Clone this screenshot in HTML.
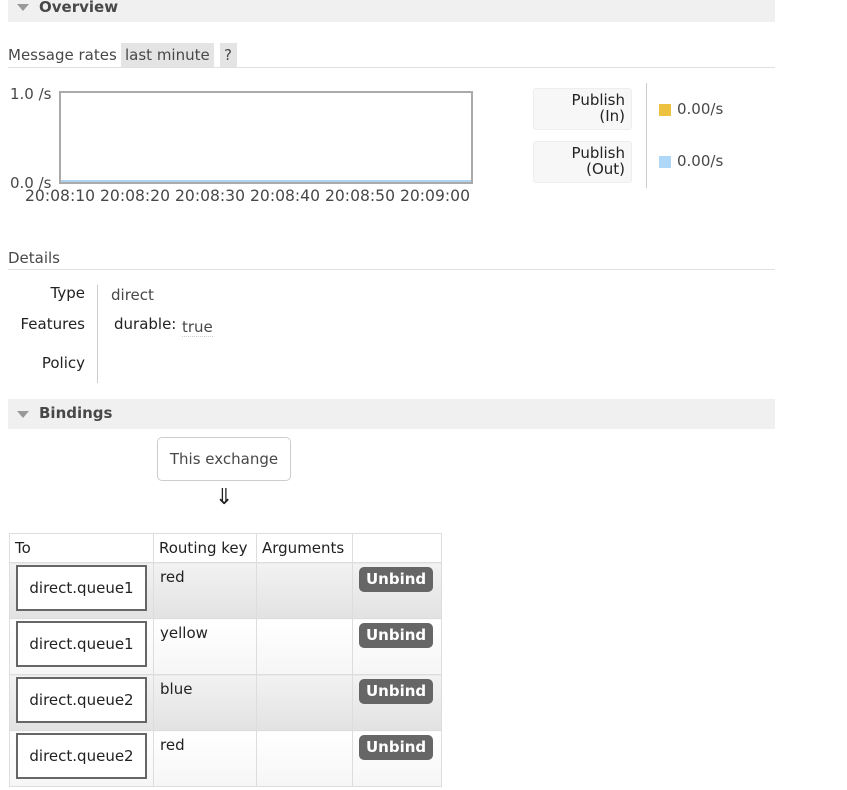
<!DOCTYPE html>
<html><head><meta charset="utf-8"><style>
*{margin:0;padding:0;box-sizing:border-box}
body{width:847px;height:790px;background:#fff;font-family:"DejaVu Sans","Liberation Sans",sans-serif;font-size:15px;color:#484848;position:relative;overflow:hidden}
.a{position:absolute;white-space:nowrap}
.hdr{position:absolute;left:8px;width:767px;background:#f0f0f0}
.hdr span{position:absolute;left:31px;font-weight:bold;font-size:15px;color:#484848}
.tri{position:absolute;left:9px;width:0;height:0;border-left:6px solid transparent;border-right:6px solid transparent;border-top:7px solid #999}
table{position:absolute;left:9px;top:533px;border-collapse:collapse;font-size:15px}
td,th{border:1px solid #ddd;vertical-align:top;text-align:left;font-weight:normal;color:#222}
th{height:29px;padding:5px 5px 0 5px}
td{height:56px;padding:5px 6px}
tr.o td{background:linear-gradient(#f2f2f2,#e2e2e2)}
tr.e td{background:linear-gradient(#fff,#f6f6f6)}
.q{width:131px;height:46px;border:2px solid #666;background:#fff;text-align:center;line-height:42px;margin:-2px 0 0 0;color:#222;font-size:15px}
td.c1{padding:4px 6px}
.ub{display:inline-block;background:#666;color:#fff;font-weight:bold;border-radius:5px;padding:3px 7px 4px;font-size:15px;margin-top:-1px}
</style></head><body>
<div class="hdr" style="top:-8px;height:30px"><div class="tri" style="top:12px"></div><span style="top:6px">Overview</span></div>

<div class="a" style="left:8px;top:46px">Message rates</div>
<div class="a" style="left:121px;top:43px;width:93px;height:24px;background:#e4e4e4"></div>
<div class="a" style="left:125px;top:46px">last minute</div>
<div class="a" style="left:220px;top:43px;width:17px;height:24px;background:#e4e4e4"></div>
<div class="a" style="left:224px;top:46px">?</div>
<div class="a" style="left:8px;top:67px;width:767px;height:1px;background:#e0e0e0"></div>

<div class="a" style="left:10px;top:85px">1.0 /s</div>
<div class="a" style="left:10px;top:174px">0.0 /s</div>
<div class="a" style="left:59px;top:91px;width:414px;height:93px;border:2px solid #aaa;background:#fff"></div>
<div class="a" style="left:61px;top:180px;width:410px;height:2px;background:#aed4f0"></div>
<div class="a" style="left:25px;top:187px;font-size:15.6px">20:08:10 20:08:20 20:08:30 20:08:40 20:08:50 20:09:00</div>

<div class="a" style="left:533px;top:88px;width:99px;height:42px;background:#f7f7f7;border-radius:3px;border:1px solid #eee"></div>
<div class="a" style="left:533px;top:92px;width:92px;text-align:right;line-height:16px;color:#222">Publish<br>(In)</div>
<div class="a" style="left:533px;top:141px;width:99px;height:42px;background:#f7f7f7;border-radius:3px;border:1px solid #eee"></div>
<div class="a" style="left:533px;top:145px;width:92px;text-align:right;line-height:16px;color:#222">Publish<br>(Out)</div>
<div class="a" style="left:646px;top:83px;width:1px;height:105px;background:#ccc"></div>
<div class="a" style="left:659px;top:104px;width:12px;height:12px;background:#edc240"></div>
<div class="a" style="left:677px;top:100px">0.00/s</div>
<div class="a" style="left:659px;top:156px;width:12px;height:12px;background:#afd8f8"></div>
<div class="a" style="left:677px;top:152px">0.00/s</div>

<div class="a" style="left:8px;top:249px">Details</div>
<div class="a" style="left:8px;top:269px;width:767px;height:1px;background:#e0e0e0"></div>
<div class="a" style="left:0;top:284px;width:85px;text-align:right;color:#222">Type</div>
<div class="a" style="left:0;top:315px;width:85px;text-align:right;color:#222">Features</div>
<div class="a" style="left:0;top:354px;width:85px;text-align:right;color:#222">Policy</div>
<div class="a" style="left:97px;top:285px;width:1px;height:98px;background:#ccc"></div>
<div class="a" style="left:111px;top:286px">direct</div>
<div class="a" style="left:114px;top:315px;color:#222">durable:</div>
<div class="a" style="left:182px;top:318px;border-bottom:1px dotted #ccc">true</div>

<div class="hdr" style="top:399px;height:30px"><div class="tri" style="top:12px"></div><span style="top:5px">Bindings</span></div>
<div class="a" style="left:157px;top:437px;width:134px;height:44px;border:1px solid #ccc;border-radius:5px;text-align:center;line-height:42px">This exchange</div>
<div class="a" style="left:215px;top:485px;font-size:22px;color:#222">⇓</div>

<table>
<tr><th style="width:144px">To</th><th style="width:103px">Routing key</th><th style="width:96px">Arguments</th><th style="width:89px"></th></tr>
<tr class="o"><td class="c1"><div class="q">direct.queue1</div></td><td>red</td><td></td><td><span class="ub">Unbind</span></td></tr>
<tr class="e"><td class="c1"><div class="q">direct.queue1</div></td><td>yellow</td><td></td><td><span class="ub">Unbind</span></td></tr>
<tr class="o"><td class="c1"><div class="q">direct.queue2</div></td><td>blue</td><td></td><td><span class="ub">Unbind</span></td></tr>
<tr class="e"><td class="c1"><div class="q">direct.queue2</div></td><td>red</td><td></td><td><span class="ub">Unbind</span></td></tr>
</table>
</body></html>
